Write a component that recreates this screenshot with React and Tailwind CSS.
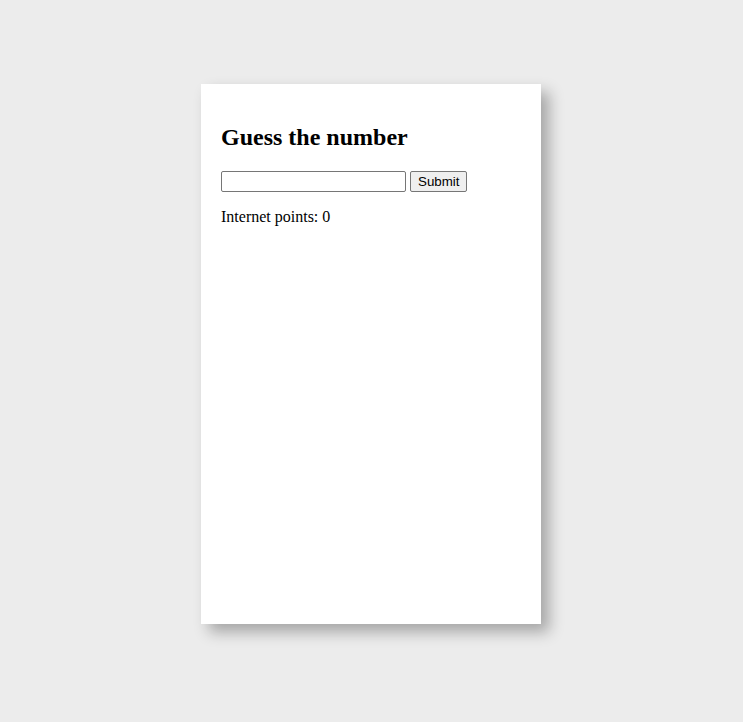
import { useState } from 'react';

export default function App() {
    const [guess, setGuess] = useState('');
    const [points, setPoints] = useState(0);

    const handleSubmit = (e) => {
        e.preventDefault();
        const target = Math.floor(Math.random() * 10) + 1;
        if (parseInt(guess, 10) === target) setPoints(points + 1);
        setGuess('');
    };

    return (
        <div className="min-h-screen bg-[#ececec] pt-[84px] pr-px flex justify-center items-start font-['Liberation_Serif',serif] text-black">
            <div className="w-[340px] h-[540px] bg-white p-5 shadow-[8px_8px_14px_rgba(0,0,0,0.3)]">
                <h2 className="text-2xl font-bold mt-[19px] mb-[20px] leading-[28px]">Guess the number</h2>
                <form onSubmit={handleSubmit} className="flex items-center gap-1">
                    <input
                        value={guess}
                        onChange={e => setGuess(e.target.value)}
                        className="w-[185px] h-[21px] border border-[#767676] rounded-[2px] px-[2px] text-[13.33px] font-['Liberation_Sans',sans-serif] outline-none"
                    />
                    <button
                        type="submit"
                        className="h-[21px] bg-[#efefef] border border-[#767676] rounded-[2px] px-[7px] text-[13.33px] leading-none font-['Liberation_Sans',sans-serif] text-black"
                    >
                        Submit
                    </button>
                </form>
                <p className="mt-4 text-base leading-[18px]">Internet points: {points}</p>
            </div>
        </div>
    );
}
